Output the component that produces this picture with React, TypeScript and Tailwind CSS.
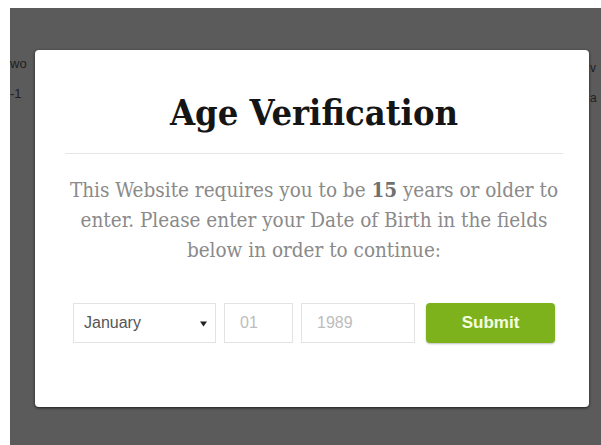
import React from "react";

const slab = { fontFamily: '"DejaVu Serif", serif', fontStretch: "condensed" } as React.CSSProperties;

export default function App() {
  return (
    <div className="w-[601px] h-[445px] bg-white pl-[10px] pt-[8px] overflow-hidden">
      <div className="relative h-full w-full bg-[#5b5b5b] pl-[25px] pt-[42px]">
        {/* page text showing at the edges of the overlay */}
        <div className="absolute left-0 top-[48px] text-[13px] leading-[16px] text-[#1e1e1e] font-['Liberation_Sans',sans-serif]">
          <div>wo</div>
          <div className="mt-[14px]">-1</div>
        </div>
        <div className="absolute left-[580px] top-[52px] text-[12px] leading-[16px] text-[#1e1e1e] font-['Liberation_Sans',sans-serif]">
          <div>v</div>
          <div className="mt-[14px]">a</div>
        </div>

        <div className="relative flex h-[357px] w-[554px] flex-col rounded-[4px] bg-white pl-[30px] pr-[26px] pt-[38px] shadow-[0_1px_3px_rgba(0,0,0,0.7)]">
          <h1
            className="text-center text-[36px] font-bold leading-[48px] text-[#151515]"
            style={slab}
          >
            Age Verification
          </h1>
          <div className="mt-[17px] border-t border-[#e6e6e6]" />
          <p
            className="mt-[21px] -mx-[4px] whitespace-nowrap text-center text-[20.5px] leading-[30px] text-[#8a8a8a]"
            style={slab}
          >
            This Website requires you to be <b className="font-bold text-[#707070]">15</b> years or older to
            <br />
            enter. Please enter your Date of Birth in the fields
            <br />
            below in order to continue:
          </p>

          <div className="mt-[38px] flex justify-center font-['Liberation_Sans',sans-serif]">
            <div className="flex h-[40px] w-[143px] items-center justify-between border border-[#e3e3e3] pl-[10px] pr-[8px] text-[16px] text-[#555]">
              <span>January</span>
              <svg width="7" height="7" viewBox="0 0 7 7" className="mt-[1px]">
                <path d="M0 1.5 L7 1.5 L3.5 6.5 Z" fill="#222" />
              </svg>
            </div>
            <div className="ml-[8px] flex h-[40px] w-[69px] items-center border border-[#e3e3e3] pl-[15px] text-[16px] text-[#bdbdbd]">
              01
            </div>
            <div className="ml-[8px] flex h-[40px] w-[114px] items-center border border-[#e3e3e3] pl-[15px] text-[16px] text-[#bdbdbd]">
              1989
            </div>
            <button className="ml-[11px] flex h-[40px] w-[129px] items-center justify-center rounded-[4px] bg-[#7db21c] text-[17px] font-bold text-[#f4ffe0] shadow-[0_1px_2px_rgba(0,0,0,0.25)]">
              Submit
            </button>
          </div>
        </div>
      </div>
    </div>
  );
}
